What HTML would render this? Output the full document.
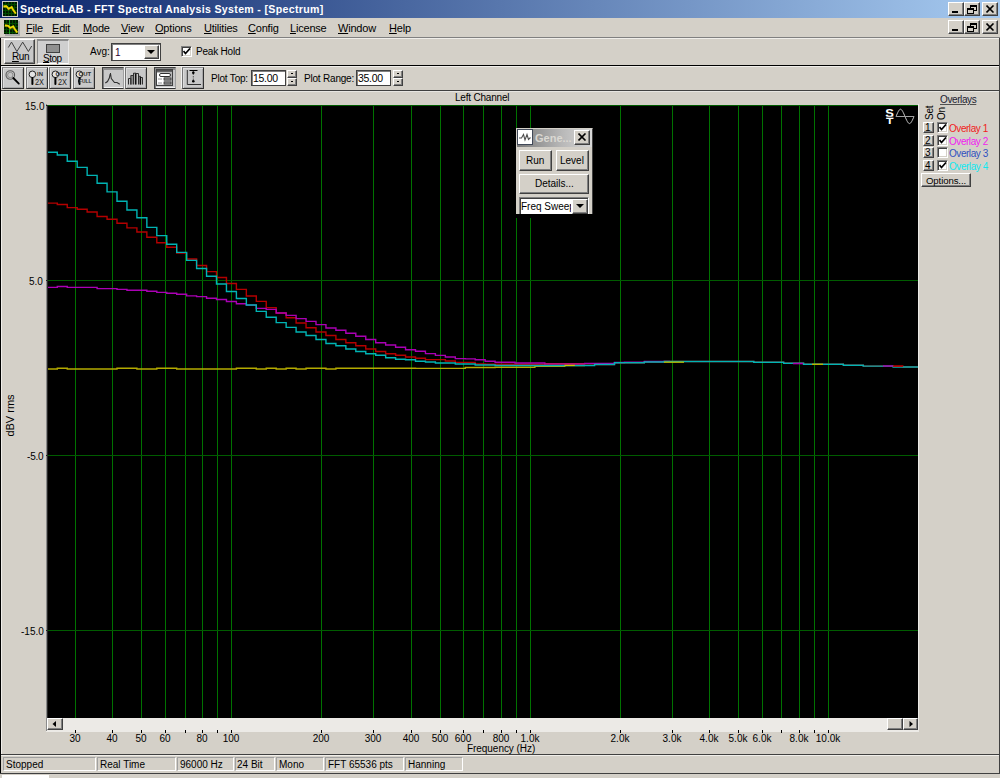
<!DOCTYPE html>
<html><head><meta charset="utf-8">
<style>
*{box-sizing:border-box}
html,body{margin:0;padding:0}
body{width:1000px;height:778px;overflow:hidden;position:relative;background:#D4D0C8;font-family:"Liberation Sans",sans-serif;font-size:11px;color:#000}
.a{position:absolute}
.t{position:absolute;white-space:nowrap;line-height:13px}
.raised{background:#D4D0C8;border-top:1px solid #fff;border-left:1px solid #fff;border-right:1px solid #404040;border-bottom:1px solid #404040;box-shadow:inset -1px -1px #808080}
.sunk{background:#fff;border-top:1px solid #808080;border-left:1px solid #808080;border-right:1px solid #fff;border-bottom:1px solid #fff;box-shadow:inset 1px 1px #404040,inset -1px -1px #D4D0C8}
.edit{background:#fff;border:1px solid #404040;box-shadow:inset 1px 1px #808080}
.tb{background:#C8C8C8;border:1px solid;border-color:#8C8C8C #303030 #303030 #767676;box-shadow:inset 1px 1px #DCDCDC,inset -1px -1px #A8A8A8,-1px -1px #F2F2F2}
.tbp{background:#C8C8C8;border:1px solid;border-color:#404040 #A0A0A0 #303030 #404040;box-shadow:inset 0 2px #8C8C8C,inset 1px 0 #808080,inset 0 -1px #F0F0F0}
.u{text-decoration:underline}
.mn{letter-spacing:-0.2px}
.cap{position:absolute;width:16px;height:14px}
</style></head><body>

<!-- title bar -->
<div class="a" style="left:0;top:0;width:1000px;height:18px;background:linear-gradient(to right,#0A246A 0%,#A6CAF0 100%)"></div>
<svg class="a" style="left:2px;top:1px" width="16" height="16" viewBox="0 0 16 16">
 <rect x="0.5" y="0.5" width="15" height="15" fill="#001800" stroke="#C8C8C8"/>
 <path d="M1 3.5H15M1 6.5H15M1 9.5H15M1 12.5H15M3.5 1V15M6.5 1V15M9.5 1V15M12.5 1V15" stroke="#004A00" stroke-width="1"/>
 <path d="M1.5 5.6 L4.4 5.4 L6.6 8 L9.7 6.3 L11.4 9.5 L13.6 12.4" stroke="#C87800" stroke-width="2.2" fill="none" opacity="0.7"/>
 <path d="M1.5 5.4 L4.4 5.2 L6.6 7.8 L9.7 6.1 L11.4 9.3 L13.8 12.4" stroke="#E8E000" stroke-width="1.6" fill="none"/>
</svg>
<div class="t" style="left:20px;top:3px;font-weight:bold;font-size:10.6px;color:#fff;letter-spacing:0.32px">SpectraLAB - FFT Spectral Analysis System - [Spectrum]</div>
<div class="cap raised" style="left:948px;top:2px"><div class="a" style="left:3px;top:8px;width:6px;height:2px;background:#000"></div></div>
<div class="cap raised" style="left:964px;top:2px"><svg class="a" style="left:2px;top:2px" width="11" height="10"><rect x="3.5" y="0.5" width="6" height="5" fill="none" stroke="#000" stroke-width="1"/><path d="M3 1.5H10" stroke="#000"/><rect x="0.5" y="3.5" width="6" height="5" fill="#D4D0C8" stroke="#000" stroke-width="1"/><path d="M0 4.5H7" stroke="#000"/></svg></div>
<div class="cap raised" style="left:982px;top:2px"><svg class="a" style="left:3px;top:2px" width="9" height="8"><path d="M0.5 0.5L7.5 7.5M7.5 0.5L0.5 7.5" stroke="#000" stroke-width="1.6"/></svg></div>

<!-- menu bar -->
<div class="a" style="left:0;top:37px;width:1000px;height:1px;background:#808080"></div>
<div class="a" style="left:0;top:38px;width:1000px;height:1px;background:#F0EEEA"></div>
<svg class="a" style="left:4px;top:20px" width="16" height="16" viewBox="0 0 16 16">
 <rect x="1" y="1" width="15" height="15" fill="#A8A8A8"/>
 <rect x="0" y="0" width="14" height="14" fill="#001800"/>
 <path d="M0 3.5H14M0 6.5H14M0 9.5H14M0 12.5H14M2.5 0V14M8.5 0V14M11.5 0V14" stroke="#004A00" stroke-width="1"/>
 <path d="M5.5 0V14" stroke="#20A020" stroke-width="1"/>
 <path d="M0.9 5.6 L4 5.9 L6.3 8.1 L9.2 6.6 L10.7 9.1 L13.1 12.5" stroke="#C87800" stroke-width="2.2" fill="none" opacity="0.7"/>
 <path d="M0.9 5.4 L4 5.7 L6.3 7.9 L9.2 6.4 L10.7 8.9 L13.3 12.5" stroke="#E8E000" stroke-width="1.6" fill="none"/>
</svg>
<div class="t mn" style="left:26px;top:22px"><span class="u">F</span>ile</div>
<div class="t mn" style="left:52px;top:22px"><span class="u">E</span>dit</div>
<div class="t mn" style="left:83px;top:22px"><span class="u">M</span>ode</div>
<div class="t mn" style="left:121px;top:22px"><span class="u">V</span>iew</div>
<div class="t mn" style="left:155px;top:22px"><span class="u">O</span>ptions</div>
<div class="t mn" style="left:204px;top:22px"><span class="u">U</span>tilities</div>
<div class="t mn" style="left:248px;top:22px"><span class="u">C</span>onfig</div>
<div class="t mn" style="left:290px;top:22px"><span class="u">L</span>icense</div>
<div class="t mn" style="left:338px;top:22px"><span class="u">W</span>indow</div>
<div class="t mn" style="left:389px;top:22px"><span class="u">H</span>elp</div>
<div class="cap raised" style="left:948px;top:20px"><div class="a" style="left:3px;top:8px;width:6px;height:2px;background:#000"></div></div>
<div class="cap raised" style="left:964px;top:20px"><svg class="a" style="left:2px;top:2px" width="11" height="10"><rect x="3.5" y="0.5" width="6" height="5" fill="none" stroke="#000" stroke-width="1"/><path d="M3 1.5H10" stroke="#000"/><rect x="0.5" y="3.5" width="6" height="5" fill="#D4D0C8" stroke="#000" stroke-width="1"/><path d="M0 4.5H7" stroke="#000"/></svg></div>
<div class="cap raised" style="left:982px;top:20px"><svg class="a" style="left:3px;top:2px" width="9" height="8"><path d="M0.5 0.5L7.5 7.5M7.5 0.5L0.5 7.5" stroke="#000" stroke-width="1.6"/></svg></div>

<!-- left/right outer borders -->
<div class="a" style="left:0;top:38px;width:1px;height:736px;background:#000"></div>
<div class="a" style="left:1px;top:91px;width:1px;height:663px;background:#F0EEEA"></div>
<div class="a" style="left:999px;top:38px;width:1px;height:740px;background:#404040"></div>

<!-- toolbar 1 -->
<div class="a" style="left:4px;top:39px;width:31px;height:25px;background:#C8C8C8;border-top:1px solid #fff;border-left:1px solid #fff;border-right:1px solid #404040;border-bottom:1px solid #404040;box-shadow:inset -1px -1px #808080"></div>
<svg class="a" style="left:4px;top:39px" width="31" height="25"><path d="M4.3 8.5 L7.5 3.1 L12.9 12.5 L18.7 3.1 L24.4 12.5 L27.7 7" fill="none" stroke="#404040" stroke-width="1"/></svg>
<div class="t" style="left:12px;top:50px;font-size:10px;letter-spacing:-0.4px"><span class="u">R</span>un</div>
<div class="a" style="left:37px;top:39px;width:32px;height:25px;background:#CFCFCF;border-top:2px solid #8C8C8C;border-left:1px solid #8C8C8C;border-right:1px solid #E8E8E8;border-bottom:1px solid #fff"></div>
<div class="a" style="left:46px;top:44px;width:14px;height:9px;background:#909090;border:1px solid #404040"></div>
<div class="t" style="left:43px;top:52px;font-size:10px;letter-spacing:-0.5px"><span class="u" style="text-underline-offset:0px">S</span>top</div>

<div class="t" style="left:90px;top:45px;font-size:10px">Avg:</div>
<div class="a edit" style="left:111px;top:43px;width:50px;height:18px"></div>
<div class="t" style="left:115px;top:46px;font-size:10px;color:#300030">1</div>
<div class="a raised" style="left:144px;top:45px;width:15px;height:14px"></div>
<svg class="a" style="left:147px;top:50px" width="9" height="5"><path d="M0 0H8L4 4Z" fill="#000"/></svg>

<div class="a sunk" style="left:181px;top:46px;width:11px;height:11px"></div>
<svg class="a" style="left:183px;top:48px" width="8" height="7"><path d="M0.5 3 L2.5 5.5 L7 0.5" fill="none" stroke="#000" stroke-width="1.7"/></svg>
<div class="t" style="left:196px;top:45px;font-size:10px;letter-spacing:-0.2px">Peak Hold</div>

<!-- separators toolbar -->
<div class="a" style="left:1px;top:65px;width:998px;height:1px;background:#000"></div>
<div class="a" style="left:1px;top:66px;width:998px;height:1px;background:#F0EEEA"></div>

<!-- toolbar 2 -->
<div class="a tb" style="left:2px;top:67px;width:22px;height:22px"></div>
<svg class="a" style="left:2px;top:67px" width="22" height="22"><circle cx="8.3" cy="8" r="4.3" fill="none" stroke="#5A5A5A" stroke-width="1.1"/><circle cx="8.3" cy="8" r="2.7" fill="#C4C4C4" stroke="#8A8A8A" stroke-width="1"/><path d="M11.3 11 L16.8 16.6" stroke="#000" stroke-width="1.8" stroke-linecap="round"/></svg>
<div class="a tb" style="left:26px;top:67px;width:22px;height:22px"></div>
<svg class="a" style="left:26px;top:67px" width="22" height="22"><circle cx="6.4" cy="7.3" r="3.3" fill="#E4E4E4" stroke="#202020" stroke-width="1"/><path d="M6.4 11 V17" stroke="#000" stroke-width="2" stroke-linecap="round"/><text x="11" y="9" font-size="5.5" font-family="Liberation Sans" font-weight="bold" fill="#303030" textLength="6" lengthAdjust="spacingAndGlyphs">IN</text><text x="9" y="17.8" font-size="9" font-family="Liberation Sans" fill="#202020" textLength="9" lengthAdjust="spacingAndGlyphs">2X</text></svg>
<div class="a tb" style="left:49px;top:67px;width:22px;height:22px"></div>
<svg class="a" style="left:49px;top:67px" width="22" height="22"><circle cx="6.4" cy="7.3" r="3.3" fill="#E4E4E4" stroke="#202020" stroke-width="1"/><path d="M6.4 11 V17" stroke="#000" stroke-width="2" stroke-linecap="round"/><text x="6.6" y="9" font-size="5.5" font-family="Liberation Sans" font-weight="bold" fill="#303030" textLength="12.5" lengthAdjust="spacingAndGlyphs">OUT</text><text x="9" y="17.8" font-size="9" font-family="Liberation Sans" fill="#202020" textLength="9" lengthAdjust="spacingAndGlyphs">2X</text></svg>
<div class="a tb" style="left:73px;top:67px;width:22px;height:22px"></div>
<svg class="a" style="left:73px;top:67px" width="22" height="22"><circle cx="6.4" cy="7.3" r="3.3" fill="#E4E4E4" stroke="#202020" stroke-width="1"/><path d="M6.8 11 L6 14 L6.6 17" fill="none" stroke="#000" stroke-width="2" stroke-linecap="round"/><text x="5.6" y="9" font-size="5.5" font-family="Liberation Sans" font-weight="bold" fill="#303030" textLength="12.5" lengthAdjust="spacingAndGlyphs">OUT</text><text x="6" y="15.8" font-size="5" font-family="Liberation Sans" font-weight="bold" fill="#303030" textLength="12.5" lengthAdjust="spacingAndGlyphs">FULL</text></svg>

<div class="a tbp" style="left:102px;top:67px;width:22px;height:22px"></div>
<svg class="a" style="left:102px;top:67px" width="22" height="22"><path d="M3.3 16 L5.5 14.5 L7.3 11 L8.4 6 L9.3 11.5 L12.5 15.5 L15 15.5 L17.8 17.2" fill="none" stroke="#303030" stroke-width="1.1"/></svg>
<div class="a tb" style="left:125px;top:67px;width:22px;height:22px"></div>
<svg class="a" style="left:125px;top:67px" width="22" height="22"><path d="M6 17.5V8.5H8.5V17.5Z M13.5 17.5V9.3H15.5V17.5Z" fill="#8A8A8A"/><path d="M3.5 17.5V11.5H5.8V17.5 M5.8 17.5V8.5H8.5 V6.2 H11 V17.5 M8.5 6.2 V17.5 M11 6.5 H13.5 V17.5 M13.5 9.3 H15.5 V17.5 M15.5 10.5 H17.5 V17.5" fill="none" stroke="#303030" stroke-width="1"/><path d="M10.5 6.5V17.5M15.5 10V17.5" stroke="#101010" stroke-width="1.3"/></svg>
<div class="a tbp" style="left:154px;top:67px;width:22px;height:22px"></div>
<svg class="a" style="left:154px;top:67px" width="22" height="22"><rect x="2.5" y="2.5" width="16" height="16" fill="#B8B8B8" stroke="#404040"/><path d="M3 3.8H18" stroke="#505050" stroke-width="2"/><rect x="3" y="6" width="7" height="11.5" fill="#fff"/><rect x="5.5" y="6.5" width="11" height="3" rx="1.5" fill="#fff" stroke="#303030"/><rect x="10" y="11" width="7" height="2" fill="#A0A0A0" stroke="#303030" stroke-width="0.8"/><rect x="10" y="15" width="7" height="2" fill="#A0A0A0" stroke="#303030" stroke-width="0.8"/><path d="M4 12H8M4 16H8" stroke="#909090" stroke-width="1"/></svg>
<div class="a tb" style="left:182px;top:67px;width:22px;height:22px"></div>
<svg class="a" style="left:182px;top:67px" width="22" height="22"><path d="M5.3 3V17.5H19" fill="none" stroke="#303030" stroke-width="1"/><path d="M7.5 3.5H15.5" stroke="#000" stroke-width="1"/><path d="M11.3 4V14" stroke="#505050" stroke-width="1" stroke-dasharray="1.5 1"/><circle cx="11.3" cy="5.8" r="1.3"/><circle cx="11.3" cy="14.2" r="1.3"/></svg>

<div class="t" style="left:211px;top:72px;font-size:10px;letter-spacing:-0.2px">Plot Top:</div>
<div class="a edit" style="left:251px;top:70px;width:35px;height:16px"></div>
<div class="t" style="left:253px;top:72px;font-size:10.5px;letter-spacing:-0.3px">15.00</div>
<div class="a raised" style="left:287px;top:70px;width:10px;height:8px"></div>
<div class="a raised" style="left:287px;top:78px;width:10px;height:8px"></div>
<div class="a" style="left:291px;top:73px;width:2px;height:1px;background:#000"></div>
<div class="a" style="left:291px;top:81px;width:2px;height:1px;background:#000"></div>
<div class="t" style="left:304px;top:72px;font-size:10px;letter-spacing:-0.2px">Plot Range:</div>
<div class="a edit" style="left:356px;top:70px;width:35px;height:16px"></div>
<div class="t" style="left:358px;top:72px;font-size:10.5px;letter-spacing:-0.3px">35.00</div>
<div class="a raised" style="left:393px;top:70px;width:10px;height:8px"></div>
<div class="a raised" style="left:393px;top:78px;width:10px;height:8px"></div>
<div class="a" style="left:397px;top:73px;width:2px;height:1px;background:#000"></div>
<div class="a" style="left:397px;top:81px;width:2px;height:1px;background:#000"></div>

<div class="a" style="left:1px;top:90px;width:998px;height:1px;background:#404040"></div>
<div class="a" style="left:1px;top:91px;width:998px;height:1px;background:#E8E6E2"></div>

<!-- main area -->
<div class="t" style="left:455px;top:91px;font-size:10px;letter-spacing:-0.2px">Left Channel</div>

<svg width="1000" height="778" style="position:absolute;left:0;top:0">
<rect x="47" y="105" width="871" height="613" fill="#000"/>
<line x1="75.5" y1="105" x2="75.5" y2="718" stroke="#007200" stroke-width="1"/>
<line x1="112.5" y1="105" x2="112.5" y2="718" stroke="#007200" stroke-width="1"/>
<line x1="141.5" y1="105" x2="141.5" y2="718" stroke="#007200" stroke-width="1"/>
<line x1="165.5" y1="105" x2="165.5" y2="718" stroke="#007200" stroke-width="1"/>
<line x1="185.5" y1="105" x2="185.5" y2="718" stroke="#007200" stroke-width="1"/>
<line x1="202.5" y1="105" x2="202.5" y2="718" stroke="#007200" stroke-width="1"/>
<line x1="217.5" y1="105" x2="217.5" y2="718" stroke="#007200" stroke-width="1"/>
<line x1="231.5" y1="105" x2="231.5" y2="718" stroke="#007200" stroke-width="1"/>
<line x1="321.5" y1="105" x2="321.5" y2="718" stroke="#007200" stroke-width="1"/>
<line x1="373.5" y1="105" x2="373.5" y2="718" stroke="#007200" stroke-width="1"/>
<line x1="411.5" y1="105" x2="411.5" y2="718" stroke="#007200" stroke-width="1"/>
<line x1="440.5" y1="105" x2="440.5" y2="718" stroke="#007200" stroke-width="1"/>
<line x1="463.5" y1="105" x2="463.5" y2="718" stroke="#007200" stroke-width="1"/>
<line x1="483.5" y1="105" x2="483.5" y2="718" stroke="#007200" stroke-width="1"/>
<line x1="501.5" y1="105" x2="501.5" y2="718" stroke="#007200" stroke-width="1"/>
<line x1="516.5" y1="105" x2="516.5" y2="718" stroke="#007200" stroke-width="1"/>
<line x1="530.5" y1="105" x2="530.5" y2="718" stroke="#007200" stroke-width="1"/>
<line x1="620.5" y1="105" x2="620.5" y2="718" stroke="#007200" stroke-width="1"/>
<line x1="672.5" y1="105" x2="672.5" y2="718" stroke="#007200" stroke-width="1"/>
<line x1="709.5" y1="105" x2="709.5" y2="718" stroke="#007200" stroke-width="1"/>
<line x1="738.5" y1="105" x2="738.5" y2="718" stroke="#007200" stroke-width="1"/>
<line x1="762.5" y1="105" x2="762.5" y2="718" stroke="#007200" stroke-width="1"/>
<line x1="781.5" y1="105" x2="781.5" y2="718" stroke="#007200" stroke-width="1"/>
<line x1="799.5" y1="105" x2="799.5" y2="718" stroke="#007200" stroke-width="1"/>
<line x1="814.5" y1="105" x2="814.5" y2="718" stroke="#007200" stroke-width="1"/>
<line x1="828.5" y1="105" x2="828.5" y2="718" stroke="#007200" stroke-width="1"/>
<line x1="47" y1="105.5" x2="918" y2="105.5" stroke="#005C00" stroke-width="1"/>
<line x1="47" y1="280.5" x2="918" y2="280.5" stroke="#005C00" stroke-width="1"/>
<line x1="47" y1="455.5" x2="918" y2="455.5" stroke="#005C00" stroke-width="1"/>
<line x1="47" y1="630.5" x2="918" y2="630.5" stroke="#005C00" stroke-width="1"/>
<path d="M47.0 369.00 H57.30 V368.30 H67.25 V369.00 H77.20 V369.00 H87.15 V369.00 H97.10 V369.00 H107.05 V369.00 H117.00 V368.30 H126.95 V368.30 H136.90 V369.00 H146.85 V369.00 H156.80 V368.30 H166.75 V368.30 H176.70 V369.00 H186.65 V369.00 H196.60 V369.00 H206.55 V369.00 H216.50 V369.00 H226.45 V369.00 H236.40 V368.30 H246.35 V368.30 H256.30 V369.00 H266.25 V368.30 H276.20 V369.00 H286.15 V368.30 H296.10 V369.00 H306.05 V368.30 H316.00 V368.30 H325.95 V369.00 H335.90 V368.30 H345.85 V368.30 H355.80 V368.30 H365.75 V368.30 H375.70 V368.30 H385.65 V368.30 H395.60 V368.30 H405.55 V368.30 H415.50 V368.40 H425.45 V368.40 H435.40 V368.40 H445.35 V368.40 H455.30 V368.40 H465.25 V367.50 H475.20 V367.50 H485.15 V367.50 H495.10 V367.20 H505.05 V367.20 H515.00 V367.20 H524.95 V367.20 H534.90 V366.30 H544.85 V366.30 H554.80 V366.30 H564.75 V365.60 H574.70 V365.50 H585.0" fill="none" stroke="#B4AA00" stroke-width="1.4"/>
<path d="M47.0 203.10 H57.30 V204.50 H67.25 V207.60 H77.20 V209.30 H87.15 V212.00 H97.10 V216.50 H107.05 V219.20 H117.00 V223.30 H126.95 V227.90 H136.90 V232.00 H146.85 V237.20 H156.80 V242.70 H166.75 V247.20 H176.70 V253.10 H186.65 V259.00 H196.60 V265.50 H206.55 V271.60 H216.50 V277.50 H226.45 V283.50 H236.40 V289.40 H246.35 V296.00 H256.30 V301.40 H266.25 V307.60 H276.20 V313.00 H286.15 V317.80 H296.10 V323.00 H306.05 V327.80 H316.00 V332.00 H325.95 V335.50 H335.90 V339.50 H345.85 V342.80 H355.80 V345.80 H365.75 V349.00 H375.70 V351.50 H385.65 V353.80 H395.60 V355.20 H405.55 V357.00 H415.50 V358.30 H425.45 V359.60 H435.40 V359.60 H445.35 V361.00 H455.30 V362.40 H465.25 V362.40 H475.20 V364.00 H485.15 V364.20 H495.10 V364.20 H505.05 V364.20 H515.00 V364.20 H524.95 V364.20 H534.90 V364.20 H544.85 V363.90 H554.80 V363.90 H564.75 V363.90 H574.70 V363.90 H584.65 V363.90 H594.60 V364.50 H604.55 V364.50 H614.50 V362.80 H624.45 V362.80 H634.40 V362.80 H644.35 V362.00 H654.30 V362.00 H664.25 V361.50 H674.20 V361.50 H684.15 V361.50 H694.10 V361.50 H704.05 V361.50 H714.00 V361.50 H723.95 V361.50 H733.90 V361.50 H743.85 V361.50 H753.80 V362.30 H763.75 V362.30 H773.70 V362.30 H783.65 V363.30 H793.60 V363.30 H803.55 V364.30 H813.50 V364.30 H823.45 V364.30 H833.40 V364.30 H843.35 V365.30 H853.30 V365.30 H863.25 V366.10 H873.20 V366.10 H883.15 V366.10 H893.10 V366.30 H903.05 V367.00 H918.0" fill="none" stroke="#B40000" stroke-width="1.4"/>
<path d="M47.0 287.40 H57.30 V286.50 H67.25 V287.40 H77.20 V287.40 H87.15 V287.40 H97.10 V288.60 H107.05 V288.60 H117.00 V289.40 H126.95 V290.30 H136.90 V290.30 H146.85 V291.30 H156.80 V292.40 H166.75 V293.30 H176.70 V294.30 H186.65 V295.90 H196.60 V296.60 H206.55 V298.20 H216.50 V299.50 H226.45 V301.50 H236.40 V303.80 H246.35 V305.10 H256.30 V308.40 H266.25 V309.40 H276.20 V313.00 H286.15 V315.40 H296.10 V318.60 H306.05 V321.40 H316.00 V324.60 H325.95 V328.00 H335.90 V330.20 H345.85 V333.20 H355.80 V336.20 H365.75 V339.50 H375.70 V342.80 H385.65 V345.00 H395.60 V347.30 H405.55 V349.70 H415.50 V351.30 H425.45 V353.60 H435.40 V355.40 H445.35 V357.00 H455.30 V358.60 H465.25 V358.90 H475.20 V359.70 H485.15 V361.30 H495.10 V362.30 H505.05 V362.30 H515.00 V363.00 H524.95 V363.00 H534.90 V363.00 H544.85 V363.90 H554.80 V363.90 H564.75 V363.90 H574.70 V363.90 H584.65 V363.40 H594.60 V363.50 H604.55 V363.50 H614.50 V362.50 H624.45 V362.30 H634.40 V362.30 H644.35 V361.50 H654.30 V361.50 H664.25 V361.50 H670.0" fill="none" stroke="#AA00B4" stroke-width="1.4"/>
<path d="M47.0 152.30 H57.30 V155.00 H67.25 V161.30 H77.20 V167.40 H87.15 V175.40 H97.10 V183.20 H107.05 V191.90 H117.00 V201.30 H126.95 V210.00 H136.90 V217.80 H146.85 V227.40 H156.80 V235.60 H166.75 V244.20 H176.70 V252.40 H186.65 V260.40 H196.60 V268.50 H206.55 V276.30 H216.50 V284.00 H226.45 V291.50 H236.40 V298.50 H246.35 V305.00 H256.30 V311.40 H266.25 V317.20 H276.20 V322.60 H286.15 V327.40 H296.10 V332.00 H306.05 V335.50 H316.00 V339.50 H325.95 V343.50 H335.90 V345.80 H345.85 V349.00 H355.80 V351.50 H365.75 V353.80 H375.70 V355.20 H385.65 V357.80 H395.60 V359.20 H405.55 V359.80 H415.50 V361.20 H425.45 V362.00 H435.40 V363.00 H445.35 V363.00 H455.30 V364.00 H465.25 V364.00 H475.20 V365.00 H485.15 V365.00 H495.10 V365.50 H505.05 V365.50 H515.00 V365.50 H524.95 V365.50 H534.90 V365.50 H544.85 V365.50 H554.80 V365.50 H564.75 V365.50 H574.70 V365.50 H584.65 V365.50 H594.60 V364.50 H604.55 V364.50 H614.50 V362.80 H624.45 V362.80 H634.40 V362.80 H644.35 V362.00 H654.30 V362.00 H664.25 V361.50 H674.20 V361.50 H684.15 V361.50 H694.10 V361.50 H704.05 V361.50 H714.00 V361.50 H723.95 V361.50 H733.90 V361.50 H743.85 V361.50 H753.80 V362.30 H763.75 V362.30 H773.70 V362.30 H783.65 V363.30 H793.60 V363.30 H803.55 V364.30 H813.50 V364.30 H823.45 V364.30 H833.40 V364.30 H843.35 V365.30 H853.30 V365.30 H863.25 V366.10 H873.20 V366.10 H883.15 V366.10 H893.10 V367.00 H903.05 V367.00 H918.0" fill="none" stroke="#00B4B4" stroke-width="1.4"/>
<path d="M664 362.2 H684" fill="none" stroke="#B4B400" stroke-width="1.4"/>
<path d="M564.5 365.3 H574.8" fill="none" stroke="#C8C800" stroke-width="1.4"/>
<path d="M544.4 363.9 H584.4" fill="none" stroke="#C0106A" stroke-width="1.2"/>
<path d="M812 364.3 H823" fill="none" stroke="#B4B400" stroke-width="1.4"/>
<path d="M793 363.6 H803" fill="none" stroke="#AA00B4" stroke-width="1.4"/>
<path d="M883 366 H893" fill="none" stroke="#AA00B4" stroke-width="1.4"/>
<path d="M893 366.2 H903" fill="none" stroke="#C00000" stroke-width="1.4"/>
<line x1="46.5" y1="104" x2="46.5" y2="732" stroke="#8A8A8A" stroke-width="1"/>
<line x1="47.5" y1="105" x2="47.5" y2="718" stroke="#282828" stroke-width="1"/>
</svg>

<!-- y labels -->
<div class="t" style="left:25px;top:100px;font-size:10px">15.0</div>
<div class="t" style="left:29px;top:275px;font-size:10px">5.0</div>
<div class="t" style="left:27px;top:450px;font-size:10px;letter-spacing:-0.2px">-5.0</div>
<div class="t" style="left:21px;top:625px;font-size:10px">-15.0</div>
<div class="t" style="left:-11px;top:409px;font-size:11px;transform:rotate(-90deg);transform-origin:center">dBV rms</div>

<!-- ST sine icon -->
<svg class="a" style="left:883px;top:108px" width="34" height="20"><text x="2.2" y="8.8" font-size="10.6" font-weight="bold" fill="#fff" font-family="Liberation Sans" textLength="8.6" lengthAdjust="spacingAndGlyphs">S</text><rect x="3" y="8.6" width="7.5" height="1" fill="#909090"/><text x="3" y="15.6" font-size="8.4" font-weight="bold" fill="#fff" font-family="Liberation Sans" textLength="7.5" lengthAdjust="spacingAndGlyphs">T</text><path d="M13 8.5 C14.5 5 16 1.2 17.5 1.2 C19 1.2 20.5 5 22 8.5 C23.5 12 25 15.6 26.5 15.6 C28 15.6 29.5 12 31 8.5" fill="none" stroke="#C8C8C8" stroke-width="1"/><path d="M13 8.5H31" stroke="#A0A0A0" stroke-width="1"/></svg>

<!-- scrollbar -->
<div class="a" style="left:47px;top:718px;width:871px;height:13px;background:#ECEAE6"></div>
<div class="a raised" style="left:47px;top:718px;width:16px;height:12px"></div>
<svg class="a" style="left:52px;top:721px" width="5" height="7"><path d="M4 0V6L0.5 3Z" fill="#000"/></svg>
<div class="a raised" style="left:887px;top:718px;width:16px;height:12px"></div>
<div class="a raised" style="left:903px;top:718px;width:15px;height:12px"></div>
<svg class="a" style="left:909px;top:721px" width="5" height="7"><path d="M0.5 0V6L4 3Z" fill="#000"/></svg>
<div class="a" style="left:918px;top:104px;width:1px;height:628px;background:#ECEAE6"></div>
<div class="a" style="left:46px;top:731px;width:873px;height:1px;background:#ECEAE6"></div>

<!-- x ticks & labels -->
<div class="a" style="left:75px;top:730px;width:1px;height:3px;background:#000"></div>
<div class="t" style="left:45px;top:732px;width:60px;text-align:center;font-size:10px">30</div>
<div class="a" style="left:112px;top:730px;width:1px;height:3px;background:#000"></div>
<div class="t" style="left:82px;top:732px;width:60px;text-align:center;font-size:10px">40</div>
<div class="a" style="left:141px;top:730px;width:1px;height:3px;background:#000"></div>
<div class="t" style="left:111px;top:732px;width:60px;text-align:center;font-size:10px">50</div>
<div class="a" style="left:165px;top:730px;width:1px;height:3px;background:#000"></div>
<div class="t" style="left:135px;top:732px;width:60px;text-align:center;font-size:10px">60</div>
<div class="a" style="left:185px;top:730px;width:1px;height:3px;background:#000"></div>
<div class="a" style="left:202px;top:730px;width:1px;height:3px;background:#000"></div>
<div class="t" style="left:172px;top:732px;width:60px;text-align:center;font-size:10px">80</div>
<div class="a" style="left:217px;top:730px;width:1px;height:3px;background:#000"></div>
<div class="a" style="left:231px;top:730px;width:1px;height:3px;background:#000"></div>
<div class="t" style="left:201px;top:732px;width:60px;text-align:center;font-size:10px">100</div>
<div class="a" style="left:321px;top:730px;width:1px;height:3px;background:#000"></div>
<div class="t" style="left:291px;top:732px;width:60px;text-align:center;font-size:10px">200</div>
<div class="a" style="left:373px;top:730px;width:1px;height:3px;background:#000"></div>
<div class="t" style="left:343px;top:732px;width:60px;text-align:center;font-size:10px">300</div>
<div class="a" style="left:411px;top:730px;width:1px;height:3px;background:#000"></div>
<div class="t" style="left:381px;top:732px;width:60px;text-align:center;font-size:10px">400</div>
<div class="a" style="left:440px;top:730px;width:1px;height:3px;background:#000"></div>
<div class="t" style="left:410px;top:732px;width:60px;text-align:center;font-size:10px">500</div>
<div class="a" style="left:463px;top:730px;width:1px;height:3px;background:#000"></div>
<div class="t" style="left:433px;top:732px;width:60px;text-align:center;font-size:10px">600</div>
<div class="a" style="left:483px;top:730px;width:1px;height:3px;background:#000"></div>
<div class="a" style="left:501px;top:730px;width:1px;height:3px;background:#000"></div>
<div class="t" style="left:471px;top:732px;width:60px;text-align:center;font-size:10px">800</div>
<div class="a" style="left:516px;top:730px;width:1px;height:3px;background:#000"></div>
<div class="a" style="left:530px;top:730px;width:1px;height:3px;background:#000"></div>
<div class="t" style="left:500px;top:732px;width:60px;text-align:center;font-size:10px">1.0k</div>
<div class="a" style="left:620px;top:730px;width:1px;height:3px;background:#000"></div>
<div class="t" style="left:590px;top:732px;width:60px;text-align:center;font-size:10px">2.0k</div>
<div class="a" style="left:672px;top:730px;width:1px;height:3px;background:#000"></div>
<div class="t" style="left:642px;top:732px;width:60px;text-align:center;font-size:10px">3.0k</div>
<div class="a" style="left:709px;top:730px;width:1px;height:3px;background:#000"></div>
<div class="t" style="left:679px;top:732px;width:60px;text-align:center;font-size:10px">4.0k</div>
<div class="a" style="left:738px;top:730px;width:1px;height:3px;background:#000"></div>
<div class="t" style="left:708px;top:732px;width:60px;text-align:center;font-size:10px">5.0k</div>
<div class="a" style="left:762px;top:730px;width:1px;height:3px;background:#000"></div>
<div class="t" style="left:732px;top:732px;width:60px;text-align:center;font-size:10px">6.0k</div>
<div class="a" style="left:781px;top:730px;width:1px;height:3px;background:#000"></div>
<div class="a" style="left:799px;top:730px;width:1px;height:3px;background:#000"></div>
<div class="t" style="left:769px;top:732px;width:60px;text-align:center;font-size:10px">8.0k</div>
<div class="a" style="left:814px;top:730px;width:1px;height:3px;background:#000"></div>
<div class="a" style="left:828px;top:730px;width:1px;height:3px;background:#000"></div>
<div class="t" style="left:798px;top:732px;width:60px;text-align:center;font-size:10px">10.0k</div>
<div class="a" style="left:46px;top:105px;width:1px;height:1px;background:#202020"></div>
<div class="a" style="left:46px;top:280px;width:1px;height:1px;background:#202020"></div>
<div class="a" style="left:46px;top:455px;width:1px;height:1px;background:#202020"></div>
<div class="a" style="left:46px;top:630px;width:1px;height:1px;background:#202020"></div>
<div class="t" style="left:467px;top:742px;font-size:10px;letter-spacing:-0.05px">Frequency (Hz)</div>

<!-- overlays panel -->
<div class="t u" style="left:940px;top:93px;font-size:10px;letter-spacing:-0.4px;color:#202030;text-decoration-color:#505050">Overlays</div>
<div class="t" style="left:923px;top:120px;font-size:10px;letter-spacing:-0.2px;transform:rotate(-90deg);transform-origin:left top">Set</div>
<div class="t" style="left:935px;top:120px;font-size:10px;letter-spacing:-0.2px;transform:rotate(-90deg);transform-origin:left top">On</div>

<div class="a raised" style="left:923px;top:122px;width:11px;height:11px"></div><div class="t" style="left:925px;top:121px;font-size:10px">1</div>
<div class="a sunk" style="left:937px;top:122px;width:11px;height:11px"></div>
<svg class="a" style="left:939px;top:124px" width="8" height="7"><path d="M0.5 3 L2.5 5.5 L7 0.5" fill="none" stroke="#000" stroke-width="1.7"/></svg>
<div class="t" style="left:949px;top:122px;font-size:10px;color:#F02020;letter-spacing:-0.45px">Overlay 1</div>

<div class="a raised" style="left:923px;top:135px;width:11px;height:11px"></div><div class="t" style="left:925px;top:134px;font-size:10px">2</div>
<div class="a sunk" style="left:937px;top:135px;width:11px;height:11px"></div>
<svg class="a" style="left:939px;top:137px" width="8" height="7"><path d="M0.5 3 L2.5 5.5 L7 0.5" fill="none" stroke="#000" stroke-width="1.7"/></svg>
<div class="t" style="left:949px;top:135px;font-size:10px;color:#F020F0;letter-spacing:-0.45px">Overlay 2</div>

<div class="a raised" style="left:923px;top:147px;width:11px;height:11px"></div><div class="t" style="left:925px;top:146px;font-size:10px">3</div>
<div class="a sunk" style="left:937px;top:147px;width:11px;height:11px"></div>
<div class="t" style="left:949px;top:147px;font-size:10px;color:#3050C0;letter-spacing:-0.45px">Overlay 3</div>

<div class="a raised" style="left:923px;top:160px;width:11px;height:11px"></div><div class="t" style="left:925px;top:159px;font-size:10px">4</div>
<div class="a sunk" style="left:937px;top:160px;width:11px;height:11px"></div>
<svg class="a" style="left:939px;top:162px" width="8" height="7"><path d="M0.5 3 L2.5 5.5 L7 0.5" fill="none" stroke="#000" stroke-width="1.7"/></svg>
<div class="t" style="left:949px;top:160px;font-size:10px;color:#10E8F0;letter-spacing:-0.45px">Overlay 4</div>

<div class="a raised" style="left:921px;top:173px;width:50px;height:14px"></div>
<div class="t" style="left:926px;top:174px;font-size:9.6px;letter-spacing:-0.1px">Options...</div>

<!-- generator window -->
<div class="a" style="left:516px;top:128px;width:77px;height:86px;background:#D4D0C8;border-left:1px solid #D4D0C8;border-top:1px solid #D4D0C8;border-right:1px solid #404040"></div>
<div class="a" style="left:517px;top:129px;width:75px;height:18px;background:linear-gradient(to right,#7A7A7A 0%,#B8B8B8 60%,#D8D8D8 100%)"></div>
<div class="a" style="left:517px;top:129px;width:16px;height:16px;background:#fff;border:1px solid #404858"></div>
<svg class="a" style="left:518px;top:131px" width="14" height="12"><path d="M1 7 L3.5 7 L5.5 3.5 L7 9 L9 3.5 L10.5 8.5 L12.5 6.5" fill="none" stroke="#505050" stroke-width="1.1"/></svg>
<div class="t" style="left:535px;top:132px;font-weight:bold;font-size:11px;color:#DAD8D2">Gene...</div>
<div class="a raised" style="left:574px;top:130px;width:16px;height:15px"></div>
<svg class="a" style="left:578px;top:133px" width="9" height="8"><path d="M0.5 0.5L7.5 7.5M7.5 0.5L0.5 7.5" stroke="#000" stroke-width="1.6"/></svg>
<div class="a raised" style="left:519px;top:150px;width:33px;height:21px"></div>
<div class="t" style="left:526px;top:154px;font-size:10px">Run</div>
<div class="a raised" style="left:556px;top:150px;width:33px;height:21px"></div>
<div class="t" style="left:560px;top:154px;font-size:10px">Level</div>
<div class="a raised" style="left:519px;top:174px;width:70px;height:20px"></div>
<div class="t" style="left:535px;top:177px;font-size:10px">Details...</div>
<div class="a sunk" style="left:519px;top:197px;width:70px;height:20px"></div>
<div class="t" style="left:521px;top:200px;font-size:10px;width:50px;overflow:hidden">Freq Sweep</div>
<div class="a raised" style="left:572px;top:199px;width:16px;height:15px"></div>
<svg class="a" style="left:576px;top:204px" width="9" height="5"><path d="M0 0H8L4 4Z" fill="#000"/></svg>
<div class="a" style="left:516px;top:214px;width:77px;height:4px;background:#000"></div>

<!-- status bar -->
<div class="a" style="left:1px;top:754px;width:998px;height:1px;background:#404040"></div>
<div class="a" style="left:1px;top:755px;width:998px;height:1px;background:#F0EEEA"></div>
<div class="a" style="left:3px;top:757px;width:93px;height:14px;border-top:1px solid #A0A0A0;border-left:1px solid #A0A0A0;border-right:1px solid #fff;border-bottom:1px solid #fff"></div>
<div class="t" style="left:6px;top:758px;font-size:10px">Stopped</div>
<div class="a" style="left:97px;top:757px;width:79px;height:14px;border-top:1px solid #A0A0A0;border-left:1px solid #A0A0A0;border-right:1px solid #fff;border-bottom:1px solid #fff"></div>
<div class="t" style="left:100px;top:758px;font-size:10px">Real Time</div>
<div class="a" style="left:177px;top:757px;width:57px;height:14px;border-top:1px solid #A0A0A0;border-left:1px solid #A0A0A0;border-right:1px solid #fff;border-bottom:1px solid #fff"></div>
<div class="t" style="left:180px;top:758px;font-size:10px">96000 Hz</div>
<div class="a" style="left:235px;top:757px;width:40px;height:14px;border-top:1px solid #A0A0A0;border-left:1px solid #A0A0A0;border-right:1px solid #fff;border-bottom:1px solid #fff"></div>
<div class="t" style="left:237px;top:758px;font-size:10px">24 Bit</div>
<div class="a" style="left:276px;top:757px;width:48px;height:14px;border-top:1px solid #A0A0A0;border-left:1px solid #A0A0A0;border-right:1px solid #fff;border-bottom:1px solid #fff"></div>
<div class="t" style="left:279px;top:758px;font-size:10px">Mono</div>
<div class="a" style="left:325px;top:757px;width:79px;height:14px;border-top:1px solid #A0A0A0;border-left:1px solid #A0A0A0;border-right:1px solid #fff;border-bottom:1px solid #fff"></div>
<div class="t" style="left:328px;top:758px;font-size:10px">FFT 65536 pts</div>
<div class="a" style="left:405px;top:757px;width:58px;height:14px;border-top:1px solid #A0A0A0;border-left:1px solid #A0A0A0;border-right:1px solid #fff;border-bottom:1px solid #fff"></div>
<div class="t" style="left:408px;top:758px;font-size:10px">Hanning</div>
<div class="a" style="left:0;top:773px;width:1000px;height:1px;background:#404040"></div>
<div class="a" style="left:0;top:774px;width:1000px;height:4px;background:#D4D0C8"></div>
<div class="a" style="left:2px;top:775px;width:47px;height:3px;background:#fff"></div>

</body></html>
